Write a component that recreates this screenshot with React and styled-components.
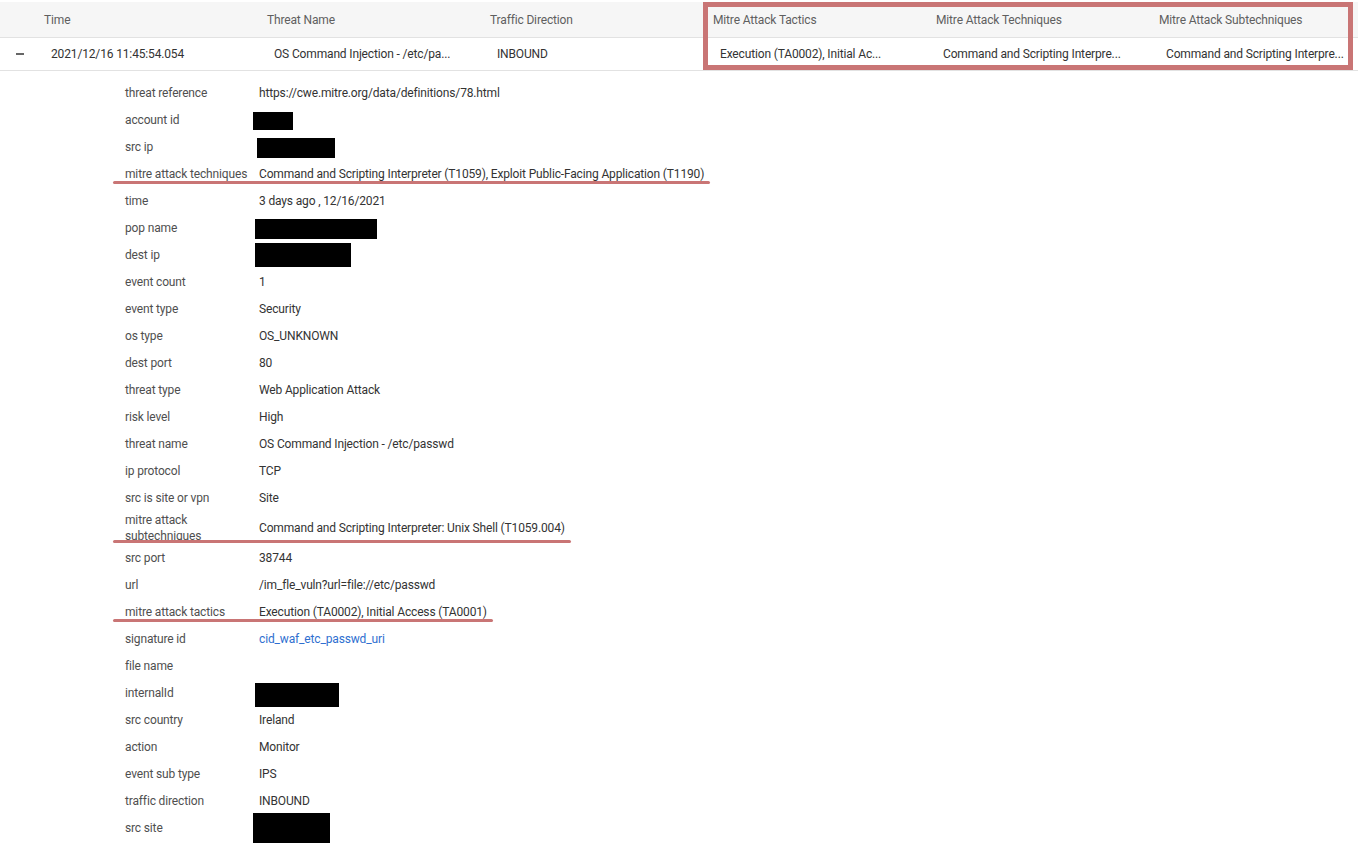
import React from 'react'
import styled, { createGlobalStyle } from 'styled-components'

const Global = createGlobalStyle`
  html, body {
    margin: 0;
    padding: 0;
    background: #fff;
    font-family: Roboto, "Liberation Sans", Arial, sans-serif;
    font-size: 12px;
    letter-spacing: -0.15px;
  }
`

const Page = styled.div`
  position: relative;
  width: 1358px;
  min-height: 846px;
  padding-top: 2px;
  box-sizing: border-box;
  overflow: hidden;
`

const Grid = styled.div`
  display: grid;
  grid-template-columns: 37px repeat(5, 223px) 1fr;
  align-items: center;
  border-bottom: 1px solid #e2e2e2;
  height: ${p => p.h}px;
  background: ${p => p.bg || '#fff'};
  box-sizing: border-box;
`

const HeadCell = styled.div`
  padding-left: 7px;
  color: #5f5f5f;
  white-space: nowrap;
`

const Cell = styled.div`
  padding-left: 14px;
  color: #333;
  white-space: nowrap;
`

const Expander = styled.div`
  width: 8px;
  height: 2px;
  margin-left: 16px;
  background: #666;
`

const Highlight = styled.div`
  position: absolute;
  left: 703px;
  top: 2px;
  width: 650px;
  height: 68px;
  border: 5px solid #c97575;
  box-sizing: border-box;
  pointer-events: none;
`

const Details = styled.div`
  padding: 8px 0 0 125px;
`

const Row = styled.div`
  position: relative;
  display: grid;
  grid-template-columns: 134px auto;
  align-items: center;
  min-height: 27px;
  padding: ${p => (p.tall ? '0.5px 0' : '0')};
  width: ${p => (p.marked ? 'fit-content' : 'auto')};
  box-sizing: border-box;

  ${p =>
    p.marked &&
    `
    &::after {
      content: '';
      position: absolute;
      left: -12px;
      right: -6px;
      bottom: ${p.tall ? 1 : 3}px;
      height: 3px;
      border-radius: 2px;
      background: #c97575;
    }
  `}
`

const Label = styled.div`
  color: #4f4f4f;
  line-height: 16px;
  padding-right: 8px;
`

const Value = styled.div`
  color: #333;
  line-height: 16px;
  display: flex;
  align-items: center;
`

const Link = styled.span`
  color: #2f6fd0;
`

const Redact = styled.span`
  display: inline-block;
  background: #000;
  width: ${p => p.w}px;
  height: ${p => p.h}px;
  margin: ${p => -(p.h - 14) / 2}px 0 ${p => -(p.h - 14) / 2}px ${p => p.dx}px;
  transform: translateY(${p => p.dy || 0}px);
`

const columns = ['Time', 'Threat Name', 'Traffic Direction', 'Mitre Attack Tactics', 'Mitre Attack Techniques', 'Mitre Attack Subtechniques']

const cells = [
  '2021/12/16 11:45:54.054',
  'OS Command Injection - /etc/pa...',
  'INBOUND',
  'Execution (TA0002), Initial Ac...',
  'Command and Scripting Interpre...',
  'Command and Scripting Interpre...',
]

const rows = [
  { label: 'threat reference', value: 'https://cwe.mitre.org/data/definitions/78.html' },
  { label: 'account id', redact: { w: 40, h: 18, dx: -6, dy: 1 } },
  { label: 'src ip', redact: { w: 78, h: 20, dx: -2, dy: 1 } },
  { label: 'mitre attack techniques', value: 'Command and Scripting Interpreter (T1059), Exploit Public-Facing Application (T1190)', marked: true },
  { label: 'time', value: '3 days ago , 12/16/2021' },
  { label: 'pop name', redact: { w: 122, h: 20, dx: -4, dy: 1 } },
  { label: 'dest ip', redact: { w: 96, h: 24, dx: -4 } },
  { label: 'event count', value: '1' },
  { label: 'event type', value: 'Security' },
  { label: 'os type', value: 'OS_UNKNOWN' },
  { label: 'dest port', value: '80' },
  { label: 'threat type', value: 'Web Application Attack' },
  { label: 'risk level', value: 'High' },
  { label: 'threat name', value: 'OS Command Injection - /etc/passwd' },
  { label: 'ip protocol', value: 'TCP' },
  { label: 'src is site or vpn', value: 'Site' },
  { label: 'mitre attack subtechniques', value: 'Command and Scripting Interpreter: Unix Shell (T1059.004)', marked: true, tall: true },
  { label: 'src port', value: '38744' },
  { label: 'url', value: '/im_fle_vuln?url=file://etc/passwd' },
  { label: 'mitre attack tactics', value: 'Execution (TA0002), Initial Access (TA0001)', marked: true },
  { label: 'signature id', link: 'cid_waf_etc_passwd_uri' },
  { label: 'file name', value: '' },
  { label: 'internalId', redact: { w: 84, h: 24, dx: -4, dy: 2 } },
  { label: 'src country', value: 'Ireland' },
  { label: 'action', value: 'Monitor' },
  { label: 'event sub type', value: 'IPS' },
  { label: 'traffic direction', value: 'INBOUND' },
  { label: 'src site', redact: { w: 77, h: 30, dx: -6 } },
]

export default function App() {
  return (
    <Page>
      <Global />
      <Grid h={36} bg="#f6f6f6">
        <div />
        {columns.map(c => (
          <HeadCell key={c}>{c}</HeadCell>
        ))}
      </Grid>
      <Grid h={33}>
        <Expander />
        {cells.map((c, i) => (
          <Cell key={i}>{c}</Cell>
        ))}
      </Grid>
      <Highlight />
      <Details>
        {rows.map(r => (
          <Row key={r.label} marked={r.marked} tall={r.tall}>
            <Label>{r.label}</Label>
            <Value>
              {r.redact && <Redact {...r.redact} />}
              {r.link && <Link>{r.link}</Link>}
              {r.value}
            </Value>
          </Row>
        ))}
      </Details>
    </Page>
  )
}
